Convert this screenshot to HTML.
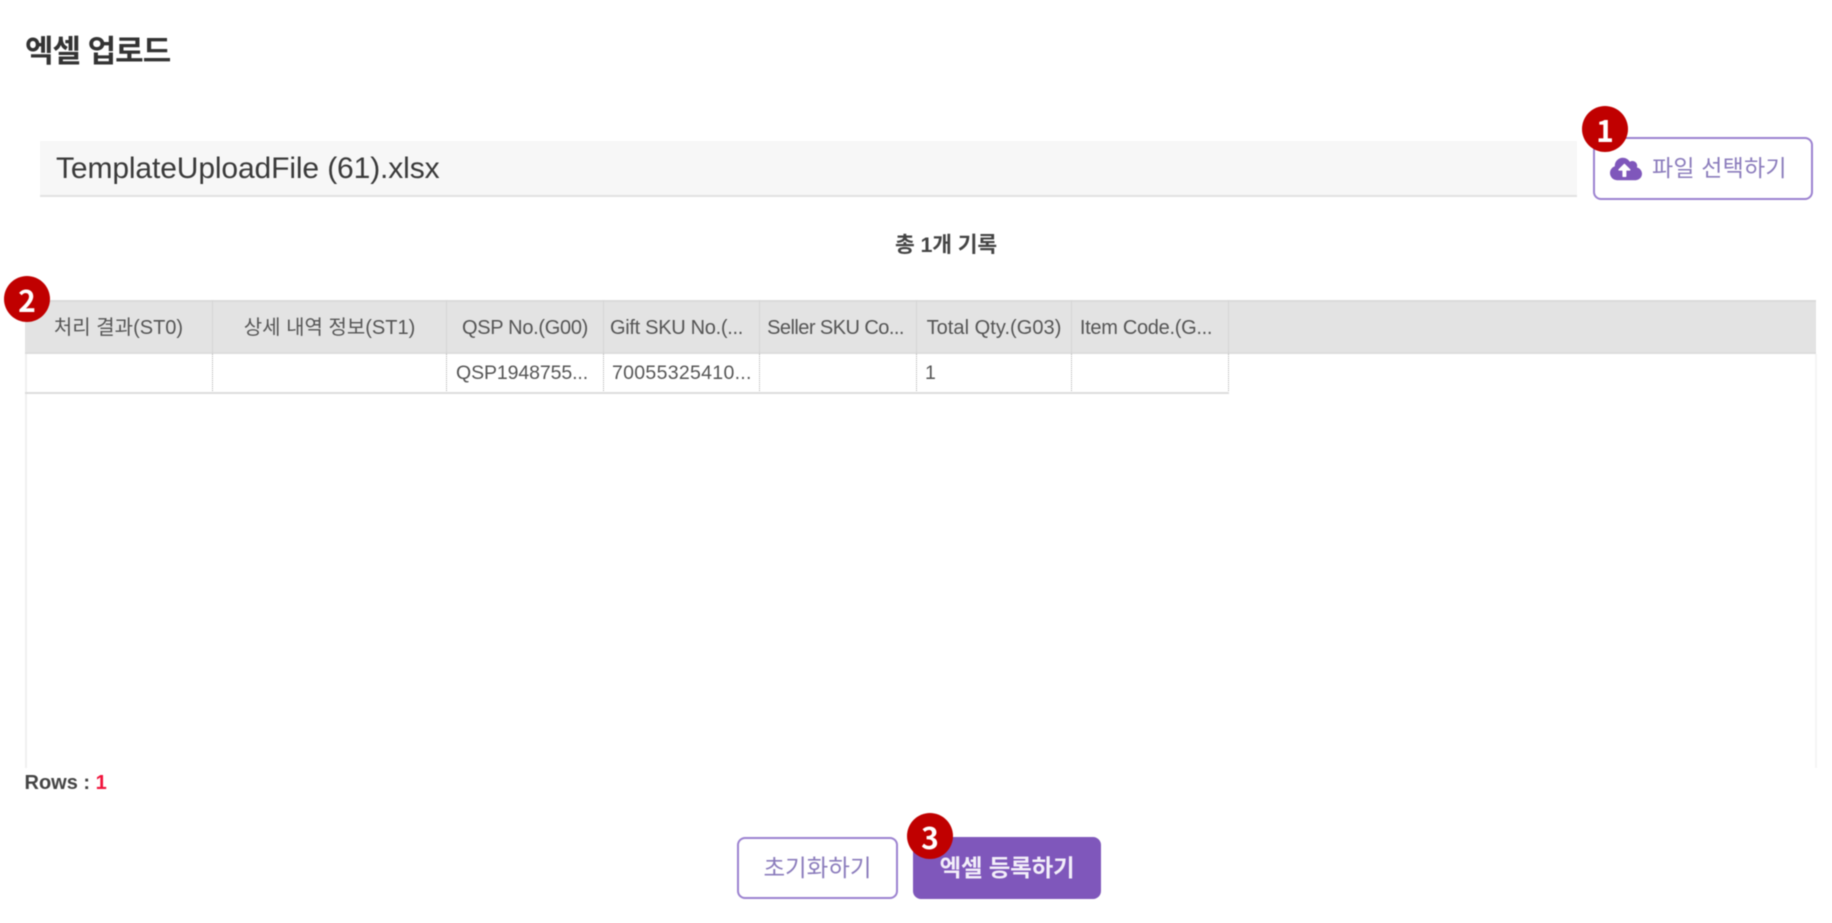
<!DOCTYPE html>
<html lang="ko"><head><meta charset="utf-8"><title>엑셀 업로드</title>
<style>
html,body{margin:0;padding:0;background:#fff}
body{width:1832px;height:923px;position:relative;overflow:hidden;font-family:"Liberation Sans","Noto Sans CJK KR",sans-serif;color:#333}
#w{position:absolute;left:0;top:0;width:1832px;height:923px;filter:blur(.45px)}
.a{position:absolute;white-space:nowrap}
.c{position:absolute;white-space:nowrap;text-align:center}
.h{top:300px;height:54px;line-height:56px;font-size:20px;color:#555;text-align:center;border-right:1px solid #d6d6d6;box-sizing:border-box;letter-spacing:-.3px}
.d{top:354px;height:39px;line-height:38px;font-size:19.5px;color:#555;border-right:1px dotted #b0b0b0;box-sizing:border-box;letter-spacing:-.1px}
.b{position:absolute;width:46px;height:46px;border-radius:50%;background:#c00000;color:#fff;font-weight:700;font-size:30px;line-height:46px;text-align:center;font-family:"Noto Sans CJK KR","Liberation Sans",sans-serif}
.btn{position:absolute;box-sizing:border-box;border:2px solid #9c82d0;border-radius:8px;background:#fff;color:#8b7cbc;text-align:center}
</style></head><body><div id="w">
<div class="a" style="left:25px;top:31px;font-size:31px;line-height:42px;font-weight:700;color:#333;letter-spacing:-1px">엑셀 업로드</div>

<div class="a" style="left:40px;top:141px;width:1537px;height:56px;background:#f7f7f7;border-bottom:2px solid #e2e2e2;box-sizing:border-box"></div>
<div class="a" style="left:56px;top:150px;font-size:30px;line-height:38px;color:#3a3a3a;letter-spacing:-.12px">TemplateUploadFile (61).xlsx</div>

<div class="btn" style="left:1593px;top:137px;width:220px;height:63px"></div>
<svg class="a" style="left:1610px;top:156px" width="32" height="26" viewBox="0 0 640 512"><path fill="#7f57bb" d="M537.6 226.6c4.1-10.7 6.4-22.4 6.4-34.6 0-53-43-96-96-96-19.7 0-38.1 6-53.3 16.2C367 64.2 315.3 32 256 32c-88.4 0-160 71.6-160 160 0 2.7.1 5.4.2 8.1C40.2 219.8 0 273.2 0 336c0 79.5 64.5 144 144 144h368c70.7 0 128-57.3 128-128 0-61.9-44-113.6-102.4-125.4zM393.4 288H328v112c0 8.8-7.2 16-16 16h-48c-8.8 0-16-7.2-16-16V288h-65.4c-14.3 0-21.4-17.2-11.3-27.3l105.4-105.4c6.2-6.2 16.4-6.2 22.6 0l105.4 105.4c10.1 10.1 2.9 27.3-11.3 27.3z"/></svg>
<div class="a" style="left:1652px;top:151px;font-size:23px;line-height:34px;color:#8b7cbc;letter-spacing:.2px">파일 선택하기</div>
<div class="b" style="left:1582px;top:106px">1</div>

<div class="c" style="left:846px;width:200px;top:230px;font-size:21.5px;line-height:30px;font-weight:700;color:#444;letter-spacing:-.15px">총 1개 기록</div>

<div class="a" style="left:25px;top:354px;width:2px;height:414px;background:#f0f0f0"></div>
<div class="a" style="left:1815px;top:354px;width:2px;height:414px;background:#f5f5f5"></div>
<div class="a" style="left:25px;top:300px;width:1791px;height:54px;background:#e3e3e3;border-top:2px solid #dadada;border-bottom:2px solid #dcdcdc;box-sizing:border-box"></div>

<div class="a h" style="left:25px;width:188px;letter-spacing:0">처리 결과(ST0)</div>
<div class="a h" style="left:213px;width:234px;letter-spacing:0">상세 내역 정보(ST1)</div>
<div class="a h" style="left:447px;width:157px">QSP No.(G00)</div>
<div class="a h" style="left:604px;width:156px;padding-right:10px">Gift SKU No.(...</div>
<div class="a h" style="left:760px;width:157px;letter-spacing:-.55px;padding-right:5px">Seller SKU Co...</div>
<div class="a h" style="left:917px;width:155px;letter-spacing:.05px">Total Qty.(G03)</div>
<div class="a h" style="left:1072px;width:157px;padding-right:8px">Item Code.(G...</div>

<div class="a d" style="left:25px;width:188px"></div>
<div class="a d" style="left:213px;width:234px"></div>
<div class="a d" style="left:447px;width:157px;padding-left:9px">QSP1948755...</div>
<div class="a d" style="left:604px;width:156px;padding-left:8px;letter-spacing:.3px">70055325410...</div>
<div class="a d" style="left:760px;width:157px"></div>
<div class="a d" style="left:917px;width:155px;padding-left:8px">1</div>
<div class="a d" style="left:1072px;width:157px"></div>
<div class="a" style="left:25px;top:392px;width:1204px;height:2px;background:#dcdcdc"></div>

<div class="b" style="left:4px;top:276px">2</div>

<div class="a" style="left:24.5px;top:768px;font-size:20px;line-height:30px;font-weight:700;color:#444">Rows : <span style="color:#f0143c">1</span></div>

<div class="btn" style="left:737px;top:837px;width:161px;height:62px;line-height:58px;font-size:23.5px">초기화하기</div>
<div class="btn" style="left:913px;top:837px;width:188px;height:62px;line-height:58px;font-size:23.5px;background:#7f57bb;border-color:#7f57bb;color:#f2eef9;font-weight:700;letter-spacing:-.2px">엑셀 등록하기</div>
<div class="b" style="left:907px;top:813px">3</div>
</div></body></html>
